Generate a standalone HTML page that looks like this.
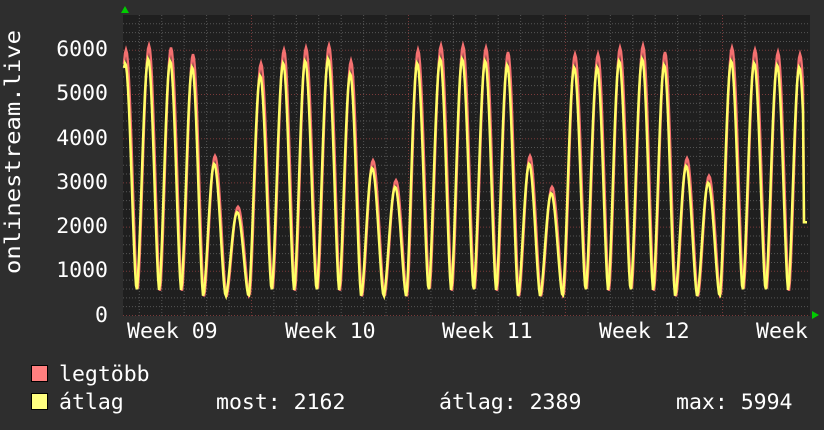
<!DOCTYPE html>
<html><head><meta charset="utf-8"><style>
html,body{margin:0;padding:0;background:#2e2e2e;width:824px;height:430px;overflow:hidden}
svg{display:block}
text{font-family:"DejaVu Sans Mono","Liberation Mono",monospace;fill:#fff;font-size:21.5px}
</style></head><body>
<svg id="s" width="824" height="430" xmlns="http://www.w3.org/2000/svg">
<rect x="0" y="0" width="824" height="430" fill="#2e2e2e"/>
<rect x="123" y="15" width="687" height="301" fill="#1f1f1f"/>
<g id="grid"></g>
<g id="data"></g>
<polygon points="121,13 125,6 129,13" fill="#0c0"/>
<polygon points="812,311 819,315 812,319" fill="#0c0"/>
<g text-anchor="end" dominant-baseline="middle">
<text x="108" y="50">6000</text><text x="108" y="94">5000</text><text x="108" y="139">4000</text>
<text x="108" y="183">3000</text><text x="108" y="227">2000</text><text x="108" y="271">1000</text>
<text x="108" y="316">0</text></g>
<text transform="translate(20,274) rotate(-90)" textLength="244" lengthAdjust="spacingAndGlyphs">onlinestream.live</text>
<text x="127" y="338">Week 09</text><text x="285" y="338">Week 10</text><text x="442" y="338">Week 11</text>
<text x="599" y="338">Week 12</text><text x="756" y="338">Week</text>
<rect x="31.5" y="365.5" width="16" height="16" fill="#ff7f7f" stroke="#000"/>
<rect x="31.5" y="393.5" width="16" height="16" fill="#ffff7f" stroke="#000"/>
<text x="59" y="381">legtöbb</text>
<text x="59" y="409">átlag</text>
<text x="216" y="409">most: 2162</text>
<text x="439" y="409">átlag: 2389</text>
<text x="676" y="409">max: 5994</text>
</svg>
<script>
var NS="http://www.w3.org/2000/svg",g=document.getElementById('grid'),d=document.getElementById('data');
function ln(x1,y1,x2,y2,c){var l=document.createElementNS(NS,'line');l.setAttribute('x1',x1);l.setAttribute('y1',y1);l.setAttribute('x2',x2);l.setAttribute('y2',y2);l.setAttribute('stroke',c);l.setAttribute('stroke-width',1);l.setAttribute('stroke-dasharray','1,2');g.appendChild(l);}
for(var k=0;k<=33;k++){var y=315.5-k*8.84;if(y<15)break;ln(123,y,810,y,k%5==0?'#7a3a3a':'#555');}
for(var k=-1;k<40;k++){var x=722.5-k*22.43;if(x<123||x>810)continue;ln(x,15,x,316,(k%7==0)?'#7a3a3a':'#555');}
var pk=[[126,6000],[149,6100],[171,6050],[193,5900],[215,3600],[238,2450],[261,5700],[284,6000],[306,6050],[329,6100],[351,5750],[373,3500],[396,3050],[418,6000],[441,6100],[463,6100],[486,6050],[508,5950],[530,3600],[552,2900],[575,5900],[598,5900],[620,6050],[643,6100],[665,5950],[687,3550],[709,3150],[732,6050],[755,6000],[778,5950],[800,5900],[823,5900]];
function val(x,sc){var i=0;while(i<pk.length-1&&pk[i+1][0]<x)i++;var a=pk[i],b=pk[i+1];var lo=(a[1]<4000||b[1]<4000)?420:550;var t=(x-a[0])/(b[0]-a[0]);var c=(1+Math.cos(2*Math.PI*t))/2;c=Math.pow(c,0.8);var p=t<0.5?a[1]:b[1];return lo+(p*sc-lo)*c;}
function line(sc,col,off){var pts=[];for(var x=124;x<=807;x+=1){var v=val(x+off,sc);if(x>803)v=2100;pts.push(x+','+(315-v*0.0442).toFixed(1));}var p=document.createElementNS(NS,'polyline');p.setAttribute('points',pts.join(' '));p.setAttribute('fill','none');p.setAttribute('stroke',col);p.setAttribute('stroke-width',2.5);d.appendChild(p);}
line(1,'#f47070',0);line(0.95,'#ffff66',0.8);
</script>
</body></html>
